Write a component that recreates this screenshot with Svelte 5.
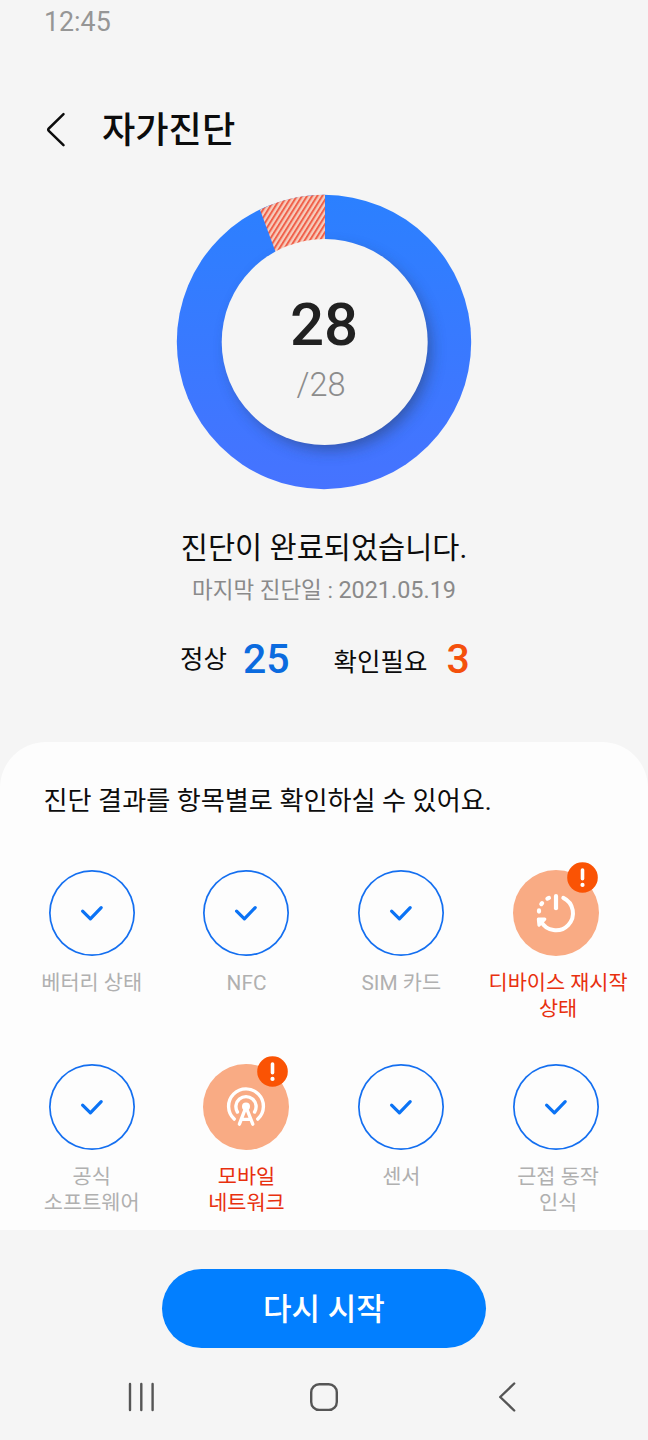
<script lang="ts">
  type Item = { lines: string[]; icon?: 'restart' | 'network' }

  const total = 28
  const normal = 25
  const warnings = 3

  const items: Item[] = [
    { lines: ['베터리 상태'] },
    { lines: ['NFC'] },
    { lines: ['SIM 카드'] },
    { lines: ['디바이스 재시작', '상태'], icon: 'restart' },
    { lines: ['공식', '소프트웨어'] },
    { lines: ['모바일', '네트워크'], icon: 'network' },
    { lines: ['센서'] },
    { lines: ['근접 동작', '인식'] }
  ]
</script>

<div class="screen">
  <div class="status">12:45</div>

  <header>
    <svg class="back" width="20" height="36" viewBox="0 0 20 36">
      <path d="M17.5 2.2 2.8 16.5q-1.2 1.2 0 2.4L17.5 33.1" />
    </svg>
    <h1>자가진단</h1>
  </header>

  <div class="chart">
    <svg width="296" height="298" viewBox="0 0 296 298">
      <defs>
        <linearGradient id="ring" x1="0" y1="0" x2="0" y2="1">
          <stop offset="0" stop-color="#2b80ff" />
          <stop offset="1" stop-color="#4673ff" />
        </linearGradient>
        <pattern id="hatch" width="4.3" height="8" patternUnits="userSpaceOnUse" patternTransform="rotate(32)">
          <rect width="4.3" height="8" fill="#f6cdbd" />
          <rect width="2" height="8" fill="#f0604a" />
        </pattern>
        <clipPath id="disc"><circle cx="148" cy="149" r="147" /></clipPath>
        <filter id="soft" x="-20%" y="-20%" width="140%" height="140%">
          <feGaussianBlur stdDeviation="8" />
        </filter>
      </defs>
      <circle cx="148" cy="149" r="147.2" fill="url(#ring)" />
      <circle cx="154" cy="156" r="100" fill="#2c3f6c" opacity=".62" filter="url(#soft)" clip-path="url(#disc)" />
      <path d="M84 16.7A147 147 0 0 1 149 1.8V48L100 60Z" fill="url(#hatch)" />
      <circle cx="148.7" cy="149" r="103" fill="#f5f5f5" />
    </svg>
    <div class="score">
      <strong>{total}</strong>
      <span>/{total}</span>
    </div>
  </div>

  <p class="done">진단이 완료되었습니다.</p>
  <p class="date">마지막 진단일 : <span>2021.05.19</span></p>

  <div class="summary">
    <span class="name">정상</span>
    <b>{normal}</b>
    <span class="name check">확인필요</span>
    <b class="warn">{warnings}</b>
  </div>

  <section>
    <h2>진단 결과를 항목별로 확인하실 수 있어요.</h2>
    <div class="grid">
      {#each items as item}
        <div class="item" class:bad={item.icon}>
          <div class="circle">
            {#if item.icon === 'restart'}
              <svg width="86" height="86" viewBox="0 0 86 86">
                <path d="M50.3 27.9A17 17 0 1 1 27.9 51.1" stroke-width="4" />
                <path d="M43 26V38.2" stroke-width="4.2" />
                <path d="M34.4 28.6l1.5-.7M28.3 34.1l.8-1M26 41.6v-1.2" stroke-width="4.2" />
                <path d="M25.4 49.1h6.4l-5.8 6z" fill="#fff" stroke-width="3.2" />
              </svg>
            {:else if item.icon === 'network'}
              <svg width="86" height="86" viewBox="0 0 86 86">
                <path d="M31.2 55.1A17.4 17.4 0 1 1 54.8 55.1" stroke-width="3.4" />
                <path d="M34.4 48A10.1 10.1 0 1 1 51.6 48" stroke-width="3.4" />
                <circle cx="43" cy="42.6" r="4" fill="#fff" stroke="none" />
                <path d="M42.4 44.5 36.4 60.2M43.6 44.5 49.8 60.2M39.5 55.4h7" stroke-width="3.4" />
              </svg>
            {:else}
              <svg width="86" height="86" viewBox="0 0 86 86">
                <path d="M33.6 41.2 41.4 48.9 52.2 37.6" stroke-width="3.2" />
              </svg>
            {/if}
            {#if item.icon}
              <svg class="badge" width="31" height="31" viewBox="0 0 31 31">
                <circle cx="15.5" cy="15.5" r="15.3" fill="#fa5304" stroke="none" />
                <path d="M15.5 8V16.8" stroke-width="3.6" />
                <circle cx="15.5" cy="22.9" r="2.1" fill="#fff" stroke="none" />
              </svg>
            {/if}
          </div>
          <div class="label">
            {#each item.lines as line}
              <span>{line}</span>
            {/each}
          </div>
        </div>
      {/each}
    </div>
  </section>

  <button>다시 시작</button>

  <nav>
    <svg width="30" height="32" viewBox="0 0 30 32"><path d="M4 3v26M15.3 3v26M26.6 3v26" /></svg>
    <svg width="30" height="32" viewBox="0 0 30 32"><rect x="2.2" y="3.3" width="25.6" height="25.6" rx="8" /></svg>
    <svg width="30" height="32" viewBox="0 0 30 32"><path d="M22.2 2.5 8.2 16 22.2 29.5" /></svg>
  </nav>
</div>

<style>
  :global(body) { background: #f5f5f5; }
  .screen {
    display: flex; flex-direction: column;
    width: 648px; height: 1440px; overflow: hidden;
    background: #f5f5f5; color: #0c0c0c;
    font-family: Roboto, "Noto Sans CJK KR", sans-serif;
  }
  h1, h2, p { margin: 0; font-weight: 400; white-space: nowrap; }
  svg { display: block; fill: none; stroke-linecap: round; stroke-linejoin: round; }
  .status { height: 42px; padding-left: 44px; font-size: 26.8px; line-height: 44px; color: #969696; }
  header { display: flex; align-items: center; gap: 36px; height: 60px; padding: 57px 0 0 46px; }
  .back { margin-top: 1px; stroke: #0c0c0c; stroke-width: 2.5; }
  h1 { padding-top: 3px; font-size: 36.2px; font-weight: 500; line-height: 60px; }

  .chart { display: grid; justify-content: center; margin-top: 34px; height: 298px; }
  .chart > * { grid-area: 1 / 1; }
  .score { display: flex; flex-direction: column; align-items: center; padding-top: 95px; }
  .score strong { font-size: 60px; font-weight: 500; line-height: 74px; color: #212121; }
  .score span { margin-right: 6px; font-size: 32.5px; font-weight: 300; line-height: 46px; color: #8c8c8c; }

  .done { margin-top: 33px; font-size: 29.5px; line-height: 48px; text-align: center; }
  .date { font-size: 22.5px; line-height: 36px; text-align: center; color: #8a8a8a; }
  .date span { font-size: 23.4px; }
  .summary { display: flex; align-items: center; height: 60px; padding-left: 180px; margin-top: 21px; }
  .name { font-size: 25.5px; line-height: 40px; }
  .check { margin: 5px 0 0 44px; }
  b { margin-left: 16px; font-size: 41px; font-weight: 500; line-height: 60px; color: #0b6bdf; }
  .warn { margin-left: 19px; color: #f4500c; }

  section { height: 488px; margin-top: 53px; border-radius: 46px 46px 0 0; background: #fdfdfd; }
  h2 { padding: 39px 0 0 43.5px; font-size: 26.15px; line-height: 40px; }
  .grid { display: grid; grid-template-columns: repeat(4, 154.8px); grid-auto-rows: 194.5px; padding: 48.5px 14px 0 14.3px; }
  .item { display: flex; flex-direction: column; align-items: center; }
  .circle {
    position: relative; box-sizing: border-box; width: 86px; height: 86px;
    border-radius: 50%; box-shadow: inset 0 0 0 1.7px #146ff0; stroke: #0b73f5;
  }
  .bad .circle { background: #f9ab84; box-shadow: none; stroke: #fff; }
  .badge { position: absolute; top: -8px; right: 1.5px; }
  .label {
    display: flex; flex-direction: column; align-items: center; margin-top: 14px;
    font-size: 20.8px; line-height: 26px; white-space: nowrap; color: #b0b0b0;
  }
  .item:nth-child(4n) .label { margin-left: 4px; }
  .bad .label { color: #e8300e; }

  button {
    align-self: center; flex: none; width: 324px; height: 79px; margin-top: 39px; padding: 2px 0 0;
    border: 0; border-radius: 40px; background: #027fff; color: #fff;
    font: 500 31px/77px Roboto, "Noto Sans CJK KR", sans-serif;
  }
  nav { display: flex; justify-content: space-between; padding: 33px 126px 0; }
  nav svg { stroke: #555; stroke-width: 2.4; }
</style>
